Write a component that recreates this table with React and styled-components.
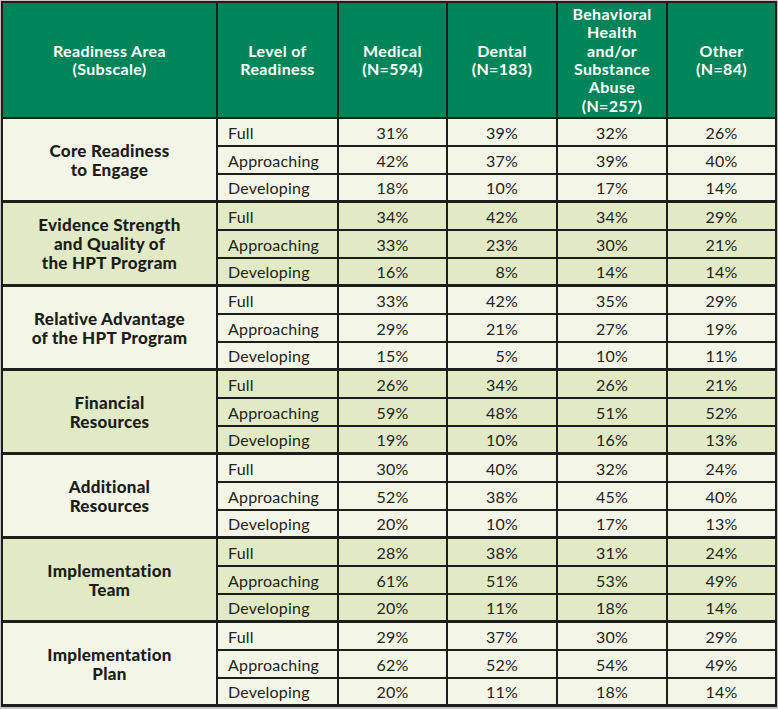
import React from "react";
import styled, { createGlobalStyle } from "styled-components";

const Global = createGlobalStyle`
  html, body { margin: 0; padding: 0; background: #c9c9c9; }
  body { font-family: Lato, "Noto Sans", "Liberation Sans", sans-serif; }
`;

const COLS = "213px 119px 107px 108px 108px 107px";

const Frame = styled.div`
  width: 778px;
  height: 709px;
  box-sizing: border-box;
  padding: 1px;
  background: #c4c4c4;
`;

const Table = styled.div`
  background: #1d1d1b;
  padding: 2px 2px 3px 2px;
  display: flex;
  flex-direction: column;
  gap: 2px;
`;

const Header = styled.div`
  display: grid;
  grid-template-columns: ${COLS};
  column-gap: 2px;
  height: 114px;
`;

const HeadCell = styled.div`
  background: #00855a;
  color: #ffffff;
  font-weight: 700;
  font-size: 16px;
  line-height: 18.4px;
  letter-spacing: 0.35px;
  display: flex;
  align-items: center;
  justify-content: center;
  text-align: center;
  padding: 0 2px;
`;

const Body = styled.div`
  display: flex;
  flex-direction: column;
  gap: 3px;
`;

const Group = styled.div`
  display: grid;
  grid-template-columns: ${COLS};
  grid-template-rows: 26px 26px 25px;
  column-gap: 2px;
  row-gap: 2px;
  height: 81px;
`;

const AreaCell = styled.div`
  grid-row: 1 / span 3;
  background: ${(p) => (p.$alt ? "#e1eac5" : "#f3f6e7")};
  color: #1d1d1b;
  font-weight: 900;
  font-size: 17px;
  line-height: 19px;
  letter-spacing: 0.25px;
  display: flex;
  align-items: center;
  justify-content: center;
  text-align: center;
`;

const Cell = styled.div`
  background: ${(p) => (p.$alt ? "#e1eac5" : "#f3f6e7")};
  color: #232320;
  font-size: 16px;
  letter-spacing: 0.2px;
  display: flex;
  align-items: center;
  justify-content: ${(p) => (p.$left ? "flex-start" : "center")};
  padding-left: ${(p) => (p.$left ? "10px" : "0")};
  font-variant-numeric: tabular-nums;
  white-space: pre;
`;

const headers = [
  ["Readiness Area", "(Subscale)"],
  ["Level of", "Readiness"],
  ["Medical", "(N=594)"],
  ["Dental", "(N=183)"],
  ["Behavioral", "Health", "and/or", "Substance", "Abuse", "(N=257)"],
  ["Other", "(N=84)"],
];

const levels = ["Full", "Approaching", "Developing"];

const groups = [
  { name: ["Core Readiness", "to Engage"], alt: false, rows: [[31, 39, 32, 26], [42, 37, 39, 40], [18, 10, 17, 14]] },
  { name: ["Evidence Strength", "and Quality of", "the HPT Program"], alt: true, rows: [[34, 42, 34, 29], [33, 23, 30, 21], [16, 8, 14, 14]] },
  { name: ["Relative Advantage", "of the HPT Program"], alt: false, rows: [[33, 42, 35, 29], [29, 21, 27, 19], [15, 5, 10, 11]] },
  { name: ["Financial", "Resources"], alt: true, rows: [[26, 34, 26, 21], [59, 48, 51, 52], [19, 10, 16, 13]] },
  { name: ["Additional", "Resources"], alt: false, rows: [[30, 40, 32, 24], [52, 38, 45, 40], [20, 10, 17, 13]] },
  { name: ["Implementation", "Team"], alt: true, rows: [[28, 38, 31, 24], [61, 51, 53, 49], [20, 11, 18, 14]] },
  { name: ["Implementation", "Plan"], alt: false, rows: [[29, 37, 30, 29], [62, 52, 54, 49], [20, 11, 18, 14]] },
];

const fmt = (n) => (n < 10 ? "\u2007" + n + "%" : n + "%");

const Lines = ({ lines }) =>
  lines.map((l, i) => (
    <React.Fragment key={i}>
      {i > 0 && <br />}
      {l}
    </React.Fragment>
  ));

export default function App() {
  return (
    <>
      <Global />
      <Frame>
        <Table>
          <Header>
            {headers.map((h, i) => (
              <HeadCell key={i}>
                <span>
                  <Lines lines={h} />
                </span>
              </HeadCell>
            ))}
          </Header>
          <Body>
            {groups.map((g, gi) => (
              <Group key={gi}>
                <AreaCell $alt={g.alt}>
                  <span>
                    <Lines lines={g.name} />
                  </span>
                </AreaCell>
                {g.rows.map((r, ri) => (
                  <React.Fragment key={ri}>
                    <Cell $alt={g.alt} $left>
                      {levels[ri]}
                    </Cell>
                    {r.map((v, vi) => (
                      <Cell key={vi} $alt={g.alt}>
                        {fmt(v)}
                      </Cell>
                    ))}
                  </React.Fragment>
                ))}
              </Group>
            ))}
          </Body>
        </Table>
      </Frame>
    </>
  );
}
